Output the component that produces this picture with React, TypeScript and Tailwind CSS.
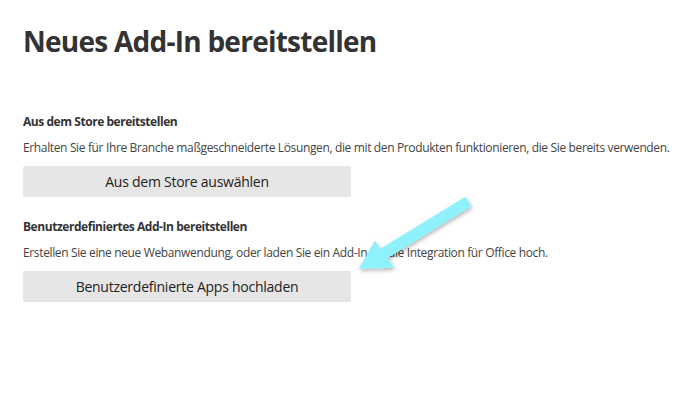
export default function App() {
  return (
    <div className="relative h-[403px] w-[687px] bg-white font-['Open_Sans',sans-serif] text-[#333]">
      <div className="flex flex-col px-[23px] pt-[21px]">
        <h1 className="text-[28px] font-bold leading-[40px] tracking-[-0.75px] whitespace-nowrap">Neues Add-In bereitstellen</h1>

        <section className="mt-[53px] flex flex-col">
          <h2 className="text-[12px] font-bold leading-[16px] tracking-[-0.45px]">Aus dem Store bereitstellen</h2>
          <p className="mt-[10px] whitespace-nowrap text-[12px] leading-[16px] tracking-[-0.36px] text-[#444]">
            Erhalten Sie für Ihre Branche maßgeschneiderte Lösungen, die mit den Produkten funktionieren, die Sie bereits verwenden.
          </p>
          <button className="mt-[10px] h-[31px] w-[328px] rounded-[2px] bg-[#e6e6e6] text-[14px] tracking-[-0.25px] text-[#222]">
            Aus dem Store auswählen
          </button>
        </section>

        <section className="mt-[22px] flex flex-col">
          <h2 className="text-[12px] font-bold leading-[16px] tracking-[-0.45px]">Benutzerdefiniertes Add-In bereitstellen</h2>
          <p className="mt-[10px] whitespace-nowrap text-[12px] leading-[16px] tracking-[-0.36px] text-[#444]">
            Erstellen Sie eine neue Webanwendung, oder laden Sie ein Add-In für die Integration für Office hoch.
          </p>
          <button className="mt-[10px] h-[31px] w-[328px] rounded-[2px] bg-[#e6e6e6] text-[14px] tracking-[-0.25px] text-[#222]">
            Benutzerdefinierte Apps hochladen
          </button>
        </section>
      </div>

      <svg className="pointer-events-none absolute left-0 top-0" width="687" height="403">
        <defs>
          <filter id="sh" x="-20%" y="-20%" width="140%" height="140%">
            <feDropShadow dx="1" dy="2" stdDeviation="2" floodColor="#000" floodOpacity="0.3" />
          </filter>
        </defs>
        <polygon
          filter="url(#sh)"
          fill="#8ef1fb"
          strokeLinejoin="round"
          stroke="#8ef1fb"
          strokeWidth="1.5"
          points="470,206 465,198 380,250 375,242 360,268 393,267 386,258"
        />
      </svg>
    </div>
  );
}
